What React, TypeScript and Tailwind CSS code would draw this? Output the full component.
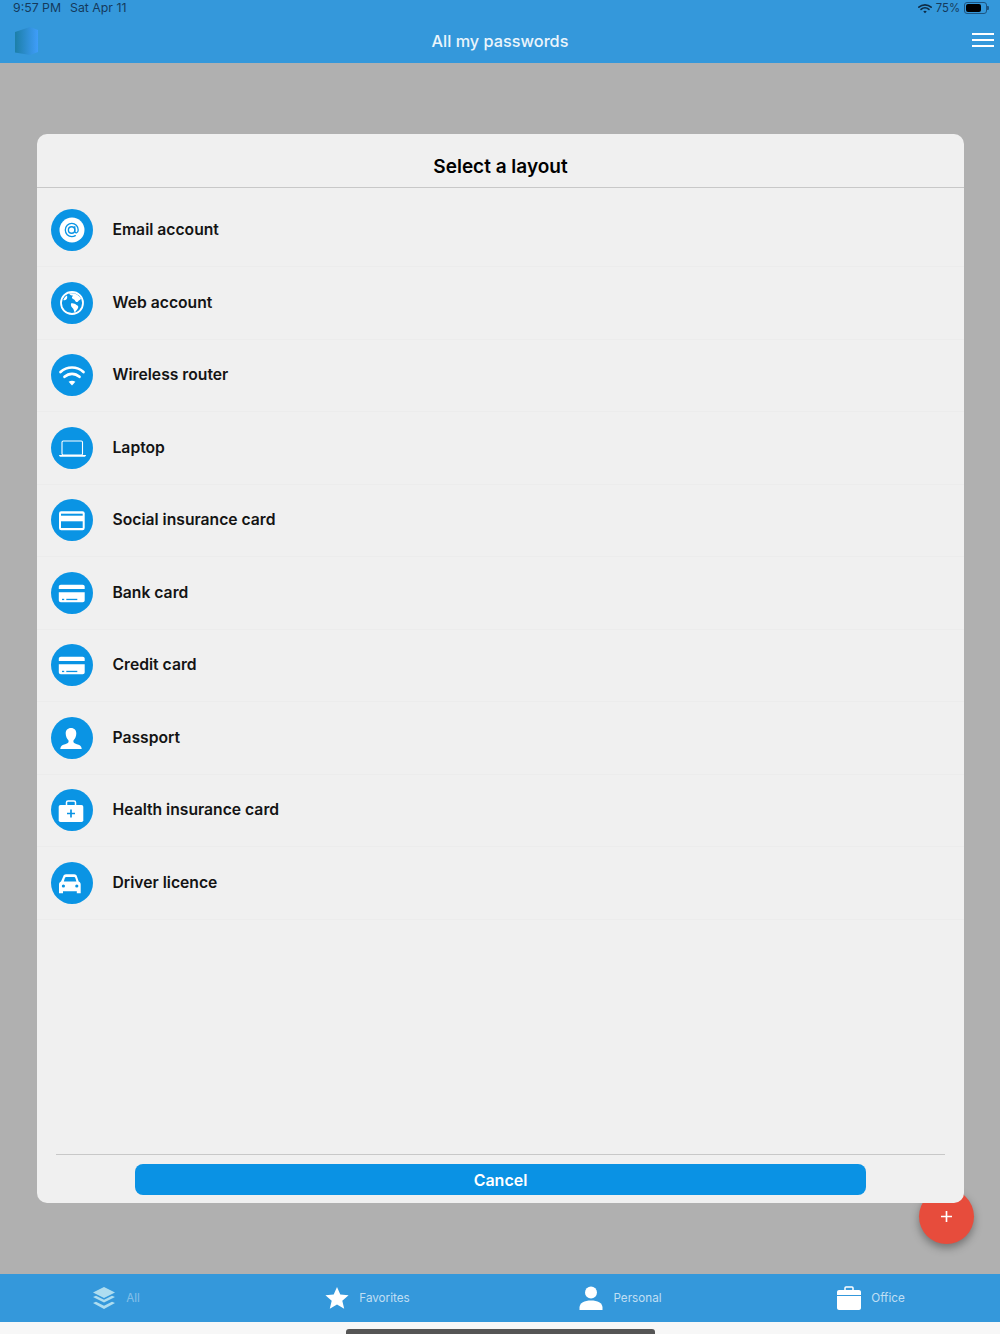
import React from 'react';

const fontClass = "font-['Inter','Liberation_Sans',sans-serif]";

const IconAt = () => (
  <svg viewBox="0 0 42 42" className="w-[42px] h-[42px]">
    <circle cx="21" cy="21" r="12.500" fill="#fff" />
    <circle cx="20.600" cy="21" r="3.200" fill="none" stroke="#0a94e4" strokeWidth="1.400" />
    <path d="M23.800 17.600v4.600c0 2.400 3.400 2.200 3.400-1.200 0-3.700-2.900-6.600-6.400-6.600s-6.500 2.900-6.500 6.600 2.900 6.600 6.500 6.600c1.400 0 2.500-.3 3.500-1" fill="none" stroke="#0a94e4" strokeWidth="1.300" strokeLinecap="round" />
  </svg>
);

const IconGlobe = () => (
  <svg viewBox="0 0 42 42" className="w-[42px] h-[42px]">
    <circle cx="21" cy="21" r="11" fill="#0a94e4" stroke="#fff" strokeWidth="1.800" />
    <path d="M18 11.500c4-1.200 9.500.5 12 5-.5 1.500-2 1.500-3 3-1 1-2.500.5-3-1-.4-1.300-2.400-1-3-2.500-.3-1 .6-1.800 1.200-2.200-1.500-.2-3.200-.6-4.200-2.300z" fill="#fff" />
    <path d="M20 21.500c1.800-.8 4 .2 5.500 1.500 1.500.5 2.300 1.500 1.500 3-.8 1.800-2 3-3.300 4.500-.8-1.200-.7-3-1.700-4-1.300-1-2.500-2.800-2-5z" fill="#fff" />
    <path d="M12.300 18c.9-2 2.200-3.600 3.600-4.500.6 1.500.4 3-.6 4-1 .8-2 .8-3 .5z" fill="#fff" />
  </svg>
);

const IconWifi = () => (
  <svg viewBox="0 0 42 42" className="w-[42px] h-[42px]" fill="none" stroke="#fff" strokeWidth="2.700" strokeLinecap="round">
    <path d="M9.500 18c6.500-6 16.500-6 23 0" />
    <path d="M13.500 22.800c4.500-4 10.500-4 15 0" />
    <path d="M21 31.500l-3.400-3.700c2-1.500 4.800-1.500 6.800 0z" fill="#fff" stroke="none" />
  </svg>
);

const IconLaptop = () => (
  <svg viewBox="0 0 42 42" className="w-[42px] h-[42px]">
    <rect x="11" y="14" width="20.500" height="14" rx="1.200" fill="none" stroke="#fff" strokeWidth="1.100" />
    <path d="M8 28h27c0 1-.8 1.800-2 1.800H10c-1.200 0-2-.8-2-1.800z" fill="#fff" />
  </svg>
);

const IconIdCard = () => (
  <svg viewBox="0 0 42 42" className="w-[42px] h-[42px]">
    <rect x="8" y="12.300" width="25.700" height="19" rx="2.200" fill="#fff" />
    <rect x="10" y="14.700" width="21.700" height="2" fill="#0a94e4" />
    <rect x="10" y="22.300" width="21.700" height="6.700" fill="#0a94e4" />
  </svg>
);

const IconBankCard = () => (
  <svg viewBox="0 0 42 42" className="w-[42px] h-[42px]">
    <path d="M7.800 14.700c0-1.300.8-2 2-2h21.900c1.200 0 2 .7 2 2V17H7.800z" fill="#fff" />
    <path d="M7.800 20.300h25.900v8c0 1.300-.8 2-2 2H9.800c-1.200 0-2-.7-2-2z" fill="#fff" />
    <rect x="11" y="26.800" width="2.200" height="1.300" fill="#0a94e4" />
    <rect x="15.300" y="26.800" width="11" height="1.300" fill="#0a94e4" />
  </svg>
);

const IconPassport = () => (
  <svg viewBox="0 0 42 42" className="w-[42px] h-[42px]">
    <path d="M20 11c-3.400 0-5.300 2.400-5.300 5.400 0 3 1.300 5.300 2.700 6.800.6 1.600 0 2.700-1.500 3.400-2.300 1-5 1.500-6 3.100-.4.800-.6 1.700-.6 2.400h21.400c0-.7-.2-1.600-.6-2.400-1-1.600-3.700-2.100-6-3.100-1.500-.7-2.100-1.800-1.500-3.400 1.400-1.500 2.700-3.800 2.700-6.800 0-3-1.900-5.400-5.300-5.400z" fill="#fff" />
  </svg>
);

const IconMedical = () => (
  <svg viewBox="0 0 42 42" className="w-[42px] h-[42px]">
    <path d="M15.500 17v-3.500c0-1 .7-1.500 1.500-1.500h6c.8 0 1.500.5 1.500 1.500V17" fill="none" stroke="#fff" strokeWidth="1.500" />
    <rect x="7.700" y="16" width="24.600" height="17" rx="1.800" fill="#fff" />
    <path d="M20 20.500v8M16 24.500h8" stroke="#0a94e4" strokeWidth="1.700" />
  </svg>
);

const IconCar = () => (
  <svg viewBox="0 0 42 42" className="w-[42px] h-[42px]">
    <path d="M12.300 14.200c.4-1.200 1.400-1.900 2.600-1.900h8.400c1.200 0 2.200.7 2.600 1.900l1.800 5.300c1.400.6 2 1.600 2 3v8.800h-3.900v-2.100H12v2.100H8v-8.800c0-1.400.6-2.400 2-3z" fill="#fff" />
    <path d="M12.800 19.500l1.100-3.500c.2-.6.600-.9 1.200-.9h8c.6 0 1 .3 1.200.9l1.100 3.500z" fill="#0a94e4" />
    <circle cx="12.400" cy="24" r="1.600" fill="#0a94e4" />
    <circle cx="25.800" cy="24" r="1.600" fill="#0a94e4" />
  </svg>
);

const layouts = [
  { label: 'Email account', icon: IconAt },
  { label: 'Web account', icon: IconGlobe },
  { label: 'Wireless router', icon: IconWifi },
  { label: 'Laptop', icon: IconLaptop },
  { label: 'Social insurance card', icon: IconIdCard },
  { label: 'Bank card', icon: IconBankCard },
  { label: 'Credit card', icon: IconBankCard },
  { label: 'Passport', icon: IconPassport },
  { label: 'Health insurance card', icon: IconMedical },
  { label: 'Driver licence', icon: IconCar },
];

const TabLayers = () => (
  <svg viewBox="0 0 24 24" className="w-6 h-6" fill="#aeddf0">
    <path d="M12 1L23 6.500 12 12 1 6.500z" />
    <path d="M1 11l3-1.300 8 4 8-4 3 1.300-11 5.500z" />
    <path d="M1 17l3-1.300 8 4 8-4 3 1.300-11 6z" />
  </svg>
);

const TabStar = () => (
  <svg viewBox="0 0 24 24" className="w-6 h-6" fill="#fff">
    <path d="M12 1l3.300 7.600 8.300.7-6.300 5.400 1.900 8.100L12 18.500l-7.200 4.300 1.900-8.100L.4 9.300l8.300-.7z" />
  </svg>
);

const TabPerson = () => (
  <svg viewBox="0 0 24 24" className="w-6 h-6" fill="#fff">
    <circle cx="12" cy="6.500" r="6" />
    <path d="M.5 24v-2.500c0-4.500 5-7 11.500-7s11.500 2.500 11.500 7V24z" />
  </svg>
);

const TabBriefcase = () => (
  <svg viewBox="0 0 24 24" className="w-6 h-6">
    <path d="M8 4V2c0-.8.500-1 1-1h6c.5 0 1 .2 1 1v2" fill="none" stroke="#fff" strokeWidth="1.500" />
    <path d="M2 4h20c1 0 2 .8 2 2v3H0V6c0-1.200 1-2 2-2z" fill="#fff" />
    <path d="M0 10h24v12c0 1.200-1 2-2 2H2c-1 0-2-.8-2-2z" fill="#fff" />
  </svg>
);

const tabs = [
  { label: 'All', icon: TabLayers, box: 'pr-[18px]', text: 'text-white/40' },
  { label: 'Favorites', icon: TabStar, box: 'pr-[15px]', text: 'text-white/70' },
  { label: 'Personal', icon: TabPerson, box: 'pr-[9px]', text: 'text-white/70' },
  { label: 'Office', icon: TabBriefcase, box: 'pr-[8px]', text: 'text-white/70' },
];

export default function App() {
  return (
    <div className={`relative w-[1000px] h-[1334px] overflow-hidden flex flex-col bg-[#b0b0b0] ${fontClass}`}>
      {/* Header */}
      <header className="h-[63px] shrink-0 bg-[#3498db] flex flex-col">
        <div className="h-[16px] flex items-center justify-between pl-[13px] pr-[11px] text-[#143a5c]">
          <div className="flex gap-[9px] text-[12.300px]">
            <span>9:57 PM</span>
            <span>Sat Apr 11</span>
          </div>
          <div className="flex items-center gap-[4px] text-[11.300px]">
            <svg viewBox="0 0 16 12" className="w-[14px] h-[11px]" fill="none" stroke="#0f2c46" strokeWidth="1.900" strokeLinecap="round">
              <path d="M1 4.500c4-3.600 10-3.600 14 0" />
              <path d="M3.500 7c2.600-2.200 6.400-2.200 9 0" />
              <path d="M8 11.500l-2-2.200c1.200-.9 2.800-.9 4 0z" fill="#0f2c46" stroke="none" />
            </svg>
            <span>75%</span>
            <div className="flex items-center">
              <div className="w-[23px] h-[12px] rounded-[3px] border border-[#1d5480] p-[1px]">
                <div className="w-[15px] h-full rounded-[2px] bg-black" />
              </div>
              <div className="w-[2px] h-[4px] rounded-r-[1px] bg-[#1d5480]" />
            </div>
          </div>
        </div>
        <div className="h-[47px] flex items-center px-[6px]">
          <div className="flex-1 pt-[3px]">
            <svg viewBox="0 0 23 28" className="w-[23px] h-[28px] ml-[9px]">
              <defs>
                <linearGradient id="logoFill" x1="0" x2="1" y1="0" y2="0">
                  <stop offset="0" stopColor="#1c7fa8" />
                  <stop offset="1" stopColor="#3f9dfa" />
                </linearGradient>
              </defs>
              <path d="M0 5L15 0l8 3v22l-8 3-15-2.500z" fill="url(#logoFill)" />
            </svg>
          </div>
          <h1 className="text-[16.300px] font-medium text-white/90 pt-[3px]">All my passwords</h1>
          <div className="flex-1 flex justify-end">
            <div className="w-[22px] flex flex-col gap-[4px]">
              <div className="h-[2px] bg-white" />
              <div className="h-[2px] bg-white" />
              <div className="h-[2px] bg-white" />
            </div>
          </div>
        </div>
      </header>

      {/* Dialog */}
      <main className="flex-1 pt-[71px] pl-[37px] pr-[36px] relative">
        <div className="relative z-10 h-[1069px] bg-[#f0f0f0] rounded-[10px] flex flex-col">
          <div className="h-[54px] shrink-0 flex items-center justify-center border-b border-[#c8c8c8] pt-[13px]">
            <h2 className="text-[19px] font-semibold text-black">Select a layout</h2>
          </div>
          <ul className="flex-1 pt-[6.500px]">
            {layouts.map((item) => (
              <li key={item.label} className="h-[72.500px] flex items-center gap-[19.500px] pl-[14px] border-b border-[#ececec]">
                <div className="w-[42px] h-[42px] rounded-full bg-[#0a94e4] shrink-0">
                  <item.icon />
                </div>
                <span className="text-[15.700px] font-semibold text-[#141414]">{item.label}</span>
              </li>
            ))}
          </ul>
          <div className="mx-[19px] h-[49px] border-t border-[#c8c8c8] pt-[9px] flex justify-center">
            <button className="w-[731px] h-[31px] rounded-[8px] bg-[#0a92e4] text-white text-[16px] font-semibold">
              Cancel
            </button>
          </div>
        </div>
        <button className="absolute left-[919px] top-[1126px] w-[55px] h-[55px] rounded-full bg-[#e74c3c] shadow-[0_4px_8px_rgba(0,0,0,0.35)] flex items-center justify-center text-white">
          <svg viewBox="0 0 12 12" className="w-[11px] h-[11px]" stroke="#fff" strokeWidth="1.800">
            <path d="M6 0v12M0 6h12" />
          </svg>
        </button>
      </main>

      {/* Tab bar */}
      <nav className="h-[48px] shrink-0 bg-[#3498db] grid grid-cols-4">
        {tabs.map((tab) => (
          <div key={tab.label} className={`flex items-center justify-center gap-[10px] ${tab.box}`}>
            <tab.icon />
            <span className={`text-[11.700px] pt-[1px] ${tab.text}`}>{tab.label}</span>
          </div>
        ))}
      </nav>
      <div className="h-[12px] shrink-0 bg-[#f7f7f7] flex justify-center items-end">
        <div className="w-[309px] h-[5px] rounded-t-[3px] bg-[#555555]" />
      </div>
    </div>
  );
}
